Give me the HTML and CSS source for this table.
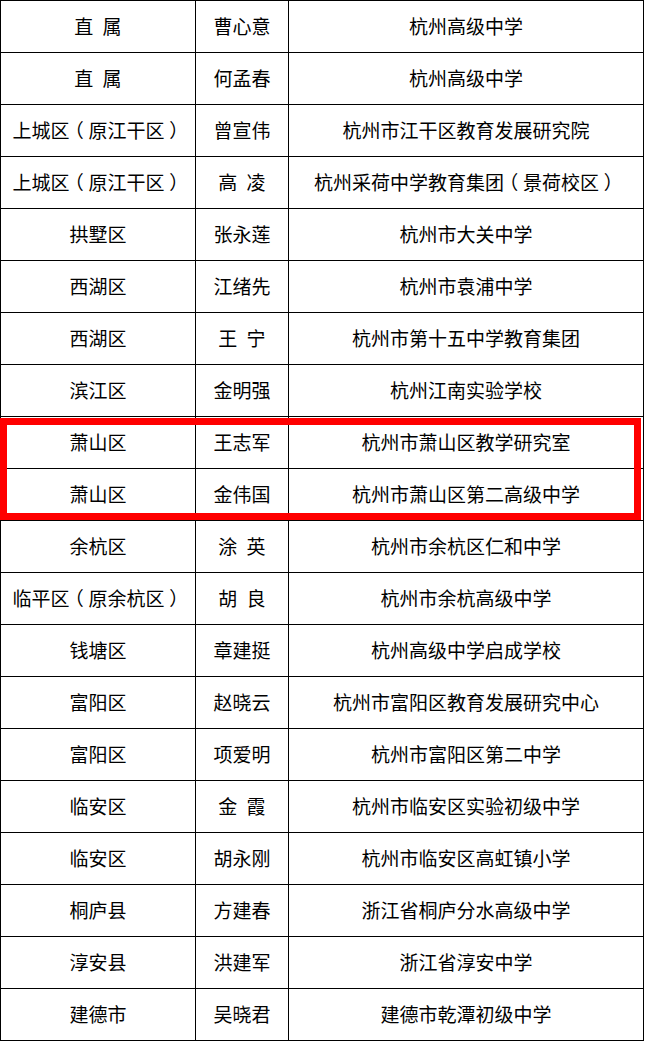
FILE: index.html
```html
<!DOCTYPE html>
<html lang="zh-CN">
<head>
<meta charset="utf-8">
<title>名单</title>
<link rel="stylesheet" href="styles.css">
</head>
<body>
<div class="wrap">
<table class="list">
<colgroup><col class="c1"><col class="c2"><col class="c3"></colgroup>
<tbody>
<tr><td>直 属</td><td>曹心意</td><td>杭州高级中学</td></tr>
<tr><td>直 属</td><td>何孟春</td><td>杭州高级中学</td></tr>
<tr><td>上城区<span class="paren">（</span>原江干区<span class="paren">）</span></td><td>曾宣伟</td><td>杭州市江干区教育发展研究院</td></tr>
<tr><td>上城区<span class="paren">（</span>原江干区<span class="paren">）</span></td><td>高 凌</td><td>杭州采荷中学教育集团<span class="paren">（</span>景荷校区<span class="paren">）</span></td></tr>
<tr><td>拱墅区</td><td>张永莲</td><td>杭州市大关中学</td></tr>
<tr><td>西湖区</td><td>江绪先</td><td>杭州市袁浦中学</td></tr>
<tr><td>西湖区</td><td>王 宁</td><td>杭州市第十五中学教育集团</td></tr>
<tr><td>滨江区</td><td>金明强</td><td>杭州江南实验学校</td></tr>
<tr><td>萧山区</td><td>王志军</td><td>杭州市萧山区教学研究室</td></tr>
<tr><td>萧山区</td><td>金伟国</td><td>杭州市萧山区第二高级中学</td></tr>
<tr><td>余杭区</td><td>涂 英</td><td>杭州市余杭区仁和中学</td></tr>
<tr><td>临平区<span class="paren">（</span>原余杭区<span class="paren">）</span></td><td>胡 良</td><td>杭州市余杭高级中学</td></tr>
<tr><td>钱塘区</td><td>章建挺</td><td>杭州高级中学启成学校</td></tr>
<tr><td>富阳区</td><td>赵晓云</td><td>杭州市富阳区教育发展研究中心</td></tr>
<tr><td>富阳区</td><td>项爱明</td><td>杭州市富阳区第二中学</td></tr>
<tr><td>临安区</td><td>金 霞</td><td>杭州市临安区实验初级中学</td></tr>
<tr><td>临安区</td><td>胡永刚</td><td>杭州市临安区高虹镇小学</td></tr>
<tr><td>桐庐县</td><td>方建春</td><td>浙江省桐庐分水高级中学</td></tr>
<tr><td>淳安县</td><td>洪建军</td><td>浙江省淳安中学</td></tr>
<tr><td>建德市</td><td>吴晓君</td><td>建德市乾潭初级中学</td></tr>
</tbody>
</table>
<div class="highlight"></div>
</div>
</body>
</html>
```

FILE: styles.css
```css
html, body {
  margin: 0;
  padding: 0;
  background: #ffffff;
}

.wrap {
  position: relative;
  width: 645px;
}

.list {
  width: 644px;
  table-layout: fixed;
  border-collapse: separate;
  border-spacing: 1px;
  background: #000000;
  font-family: "Noto Sans CJK SC", "Noto Sans", sans-serif;
  font-size: 19px;
  color: #000000;
  word-spacing: 5px;
}

.c1 { width: 194px; }
.c2 { width: 92px; }
.c3 { width: 354px; }

.list td {
  background: #ffffff;
  height: 51px;
  padding: 0 0 3px 0;
  box-sizing: border-box;
  text-align: center;
  vertical-align: middle;
  white-space: nowrap;
  line-height: 1;
}

/* full-width brackets drawn centred in their cell, as in the reference */
.paren {
  font-feature-settings: "halt" 1;
  padding: 0 0.25em;
}

.highlight {
  position: absolute;
  left: 0;
  top: 418px;
  width: 641px;
  height: 102px;
  box-sizing: border-box;
  border: 7px solid #ff0000;
  pointer-events: none;
}
```
